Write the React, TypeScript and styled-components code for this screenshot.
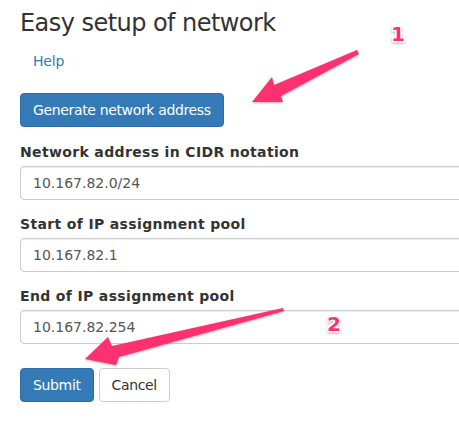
import React from "react";
import styled, { createGlobalStyle } from "styled-components";

const GlobalStyle = createGlobalStyle`
  html, body {
    margin: 0;
    padding: 0;
    background: #ffffff;
    overflow: hidden;
  }
  body {
    font-family: "DejaVu Sans", "Liberation Sans", sans-serif;
    font-size: 14px;
    color: #333333;
  }
  * { box-sizing: border-box; }
`;

const Page = styled.div`
  position: relative;
  width: 459px;
  height: 440px;
  overflow: hidden;
`;

const Content = styled.div`
  display: flex;
  flex-direction: column;
  align-items: flex-start;
  padding: 9px 0 0 20px;
  width: 700px;
`;

const Title = styled.h1`
  margin: 0;
  font-size: 24px;
  line-height: 28px;
  font-weight: normal;
  letter-spacing: -0.55px;
  color: #333333;
`;

const HelpLink = styled.a`
  margin: 14px 0 0 13px;
  font-size: 14px;
  line-height: 20px;
  color: #337ab7;
  text-decoration: none;
  letter-spacing: -0.2px;
`;

const Button = styled.button<{ $primary?: boolean }>`
  display: inline-block;
  margin: 0;
  padding: 6px 12px;
  font-family: "DejaVu Sans", "Liberation Sans", sans-serif;
  font-size: 14px;
  line-height: 20px;
  letter-spacing: -0.35px;
  border-radius: 4px;
  border: 1px solid ${(p) => (p.$primary ? "#2e6da4" : "#cccccc")};
  background: ${(p) => (p.$primary ? "#337ab7" : "#ffffff")};
  color: ${(p) => (p.$primary ? "#ffffff" : "#333333")};
  cursor: pointer;
`;

const GenerateButton = styled(Button)`
  margin-top: 22px;
`;

const Form = styled.form`
  display: flex;
  flex-direction: column;
  width: 620px;
  margin-top: 16px;
`;

const FormGroup = styled.div`
  display: flex;
  flex-direction: column;
  margin-bottom: 15px;
`;

const Label = styled.label`
  display: block;
  margin-bottom: 5px;
  font-size: 14px;
  line-height: 18px;
  font-weight: bold;
  letter-spacing: 0.35px;
  color: #333333;
`;

const Input = styled.input`
  display: block;
  width: 100%;
  height: 34px;
  padding: 6px 12px;
  font-family: "DejaVu Sans", "Liberation Sans", sans-serif;
  font-size: 14px;
  line-height: 20px;
  color: #555555;
  background: #ffffff;
  border: 1px solid #cccccc;
  border-radius: 4px;
  box-shadow: inset 0 1px 1px rgba(0, 0, 0, 0.075);
  outline: none;
`;

const Actions = styled.div`
  display: flex;
  gap: 5px;
  margin-top: 9px;
`;

const Overlay = styled.svg`
  position: absolute;
  left: 0;
  top: 0;
  pointer-events: none;
`;

const Arrow = styled.polygon`
  fill: #fe3170;
  filter: drop-shadow(0 1px 1px rgba(0, 0, 0, 0.3));
`;

const Marker = styled.text`
  font-family: "DejaVu Sans", "Liberation Sans", sans-serif;
  font-weight: bold;
  font-size: 20px;
  fill: #fe3170;
  stroke: #ffffff;
  stroke-width: 3px;
  paint-order: stroke;
  filter: drop-shadow(0 1px 1px rgba(0, 0, 0, 0.3));
`;

const fields = [
  { id: "cidr", label: "Network address in CIDR notation", value: "10.167.82.0/24" },
  { id: "start", label: "Start of IP assignment pool", value: "10.167.82.1" },
  { id: "end", label: "End of IP assignment pool", value: "10.167.82.254" },
];

export default function App() {
  return (
    <>
      <GlobalStyle />
      <Page>
        <Content>
          <Title>Easy setup of network</Title>
          <HelpLink href="#">Help</HelpLink>
          <GenerateButton type="button" $primary>
            Generate network address
          </GenerateButton>
          <Form onSubmit={(e) => e.preventDefault()}>
            {fields.map((f) => (
              <FormGroup key={f.id}>
                <Label htmlFor={f.id}>{f.label}</Label>
                <Input id={f.id} defaultValue={f.value} />
              </FormGroup>
            ))}
            <Actions>
              <Button type="submit" $primary>
                Submit
              </Button>
              <Button type="button">Cancel</Button>
            </Actions>
          </Form>
        </Content>
        <Overlay width="459" height="440" viewBox="0 0 459 440">
          <Arrow points="252,102 272,77 274,85 357,50 359,54 281,96 283,102" />
          <Arrow points="85,359 108,337 112,346 283,308 284,311 119,357 116,365" />
          <Marker x="398" y="41" textAnchor="middle">1</Marker>
          <Marker x="334" y="331" textAnchor="middle">2</Marker>
        </Overlay>
      </Page>
    </>
  );
}
